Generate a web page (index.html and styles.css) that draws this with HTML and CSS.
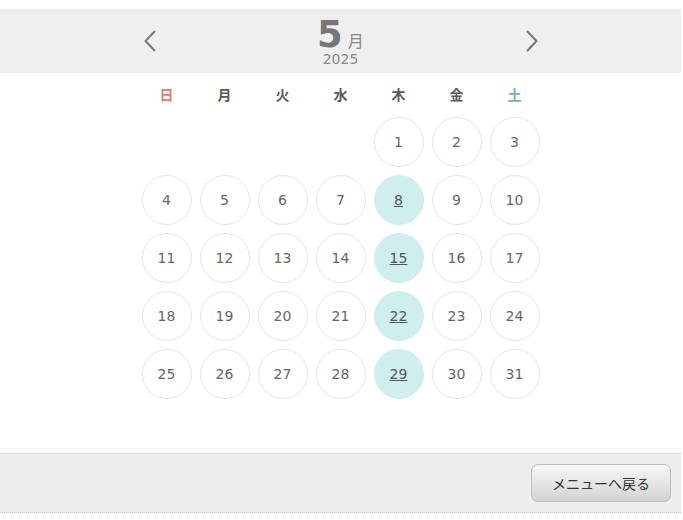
FILE: index.html
```html
<!DOCTYPE html>
<html lang="ja">
<head>
  <meta charset="UTF-8">
  <meta name="viewport" content="width=device-width, initial-scale=1.0">
  <title>カレンダー</title>
  <link rel="stylesheet" href="styles.css">
</head>
<body>
  <div class="page">
    <div class="cal-header">
      <div class="cal-nav">
        <a class="nav-btn" href="#">
          <svg width="12" height="22" viewBox="0 0 12 22"><path d="M11 1 L1.5 11 L11 21" fill="none" stroke="#777" stroke-width="2"/></svg>
        </a>
        <div class="cal-title">
          <div class="month"><span class="month-num">5</span><span class="month-unit">月</span></div>
          <div class="year">2025</div>
        </div>
        <a class="nav-btn" href="#">
          <svg width="12" height="22" viewBox="0 0 12 22"><path d="M1 1 L10.5 11 L1 21" fill="none" stroke="#777" stroke-width="2"/></svg>
        </a>
      </div>
    </div>

    <div class="calendar">
      <div class="weekdays">
        <div class="sun">日</div>
        <div>月</div>
        <div>火</div>
        <div>水</div>
        <div>木</div>
        <div>金</div>
        <div class="sat">土</div>
      </div>
      <div class="days" id="days"></div>
    </div>

    <div class="footer">
      <button class="back-btn">メニューへ戻る</button>
    </div>
  </div>

  <script>
    // May 2025 starts on Thursday
    const firstDay = 4;
    const total = 31;
    const days = document.getElementById("days");

    for (let i = 0; i < firstDay; i++) {
      days.appendChild(document.createElement("div"));
    }

    for (let d = 1; d <= total; d++) {
      const cell = document.createElement("div");
      const dow = (firstDay + d - 1) % 7;
      if (dow === 4 && d > 1) {
        cell.className = "day open";
        const a = document.createElement("a");
        a.href = "#";
        a.innerText = d;
        cell.appendChild(a);
      } else {
        cell.className = "day";
        cell.innerText = d;
      }
      days.appendChild(cell);
    }
  </script>
</body>
</html>
```

FILE: styles.css
```css
body {
  margin: 0;
  font-family: "DejaVu Sans", "Noto Sans CJK JP", sans-serif;
  color: #666;
  background: #fff;
}

.page {
  width: 681px;
  padding-top: 9px;
}

.cal-header {
  background: #efefef;
  height: 64px;
}

.cal-nav {
  width: 398px;
  height: 64px;
  margin: 0 auto;
  display: flex;
  align-items: center;
  justify-content: space-between;
}

.nav-btn {
  display: flex;
  padding: 0 1px 0 2px;
}

.cal-title {
  align-self: flex-start;
  padding-top: 7px;
  display: flex;
  flex-direction: column;
  align-items: center;
  color: #777;
}

.month {
  line-height: 38px;
}

.month-num {
  font-size: 37px;
  font-weight: bold;
}

.month-unit {
  font-family: "Noto Sans CJK JP", sans-serif;
  font-size: 16px;
  line-height: 1;
  margin-left: 5px;
  color: #888;
}

.year {
  font-size: 14px;
  line-height: 16px;
  margin-top: -10px;
  color: #888;
}

.calendar {
  width: 398px;
  margin: 10px auto 0;
}

.weekdays {
  display: grid;
  grid-template-columns: repeat(7, 50px);
  column-gap: 8px;
  font-family: "Noto Sans CJK JP", sans-serif;
  font-size: 14px;
  font-weight: bold;
  line-height: 22px;
  text-align: center;
  color: #5a5a5a;
  margin-bottom: 12px;
}

.weekdays .sun {
  color: #dd7b6c;
}

.weekdays .sat {
  color: #7ea9cc;
}

.days {
  display: grid;
  grid-template-columns: repeat(7, 50px);
  grid-auto-rows: 50px;
  gap: 8px;
}

.day {
  box-sizing: border-box;
  border: 1px solid #e4e4e4;
  border-radius: 50%;
  display: flex;
  align-items: center;
  justify-content: center;
  font-size: 14px;
  color: #666;
}

.day.open {
  background: #cfeeee;
  border-color: #cfeeee;
}

.day.open a {
  color: #555;
}

.footer {
  margin-top: 54px;
  height: 58px;
  background: #eee;
  border-top: 1px dotted #c8c8c8;
  border-bottom: 1px dotted #c8c8c8;
  display: flex;
  align-items: center;
  justify-content: flex-end;
  padding-right: 10px;
}

.back-btn {
  width: 140px;
  height: 38px;
  border: 1px solid #bbb;
  border-radius: 7px;
  background: linear-gradient(#f6f6f6, #d4d4d4);
  font-family: "Noto Sans CJK JP", sans-serif;
  font-size: 14px;
  color: #333;
  cursor: pointer;
}
```
